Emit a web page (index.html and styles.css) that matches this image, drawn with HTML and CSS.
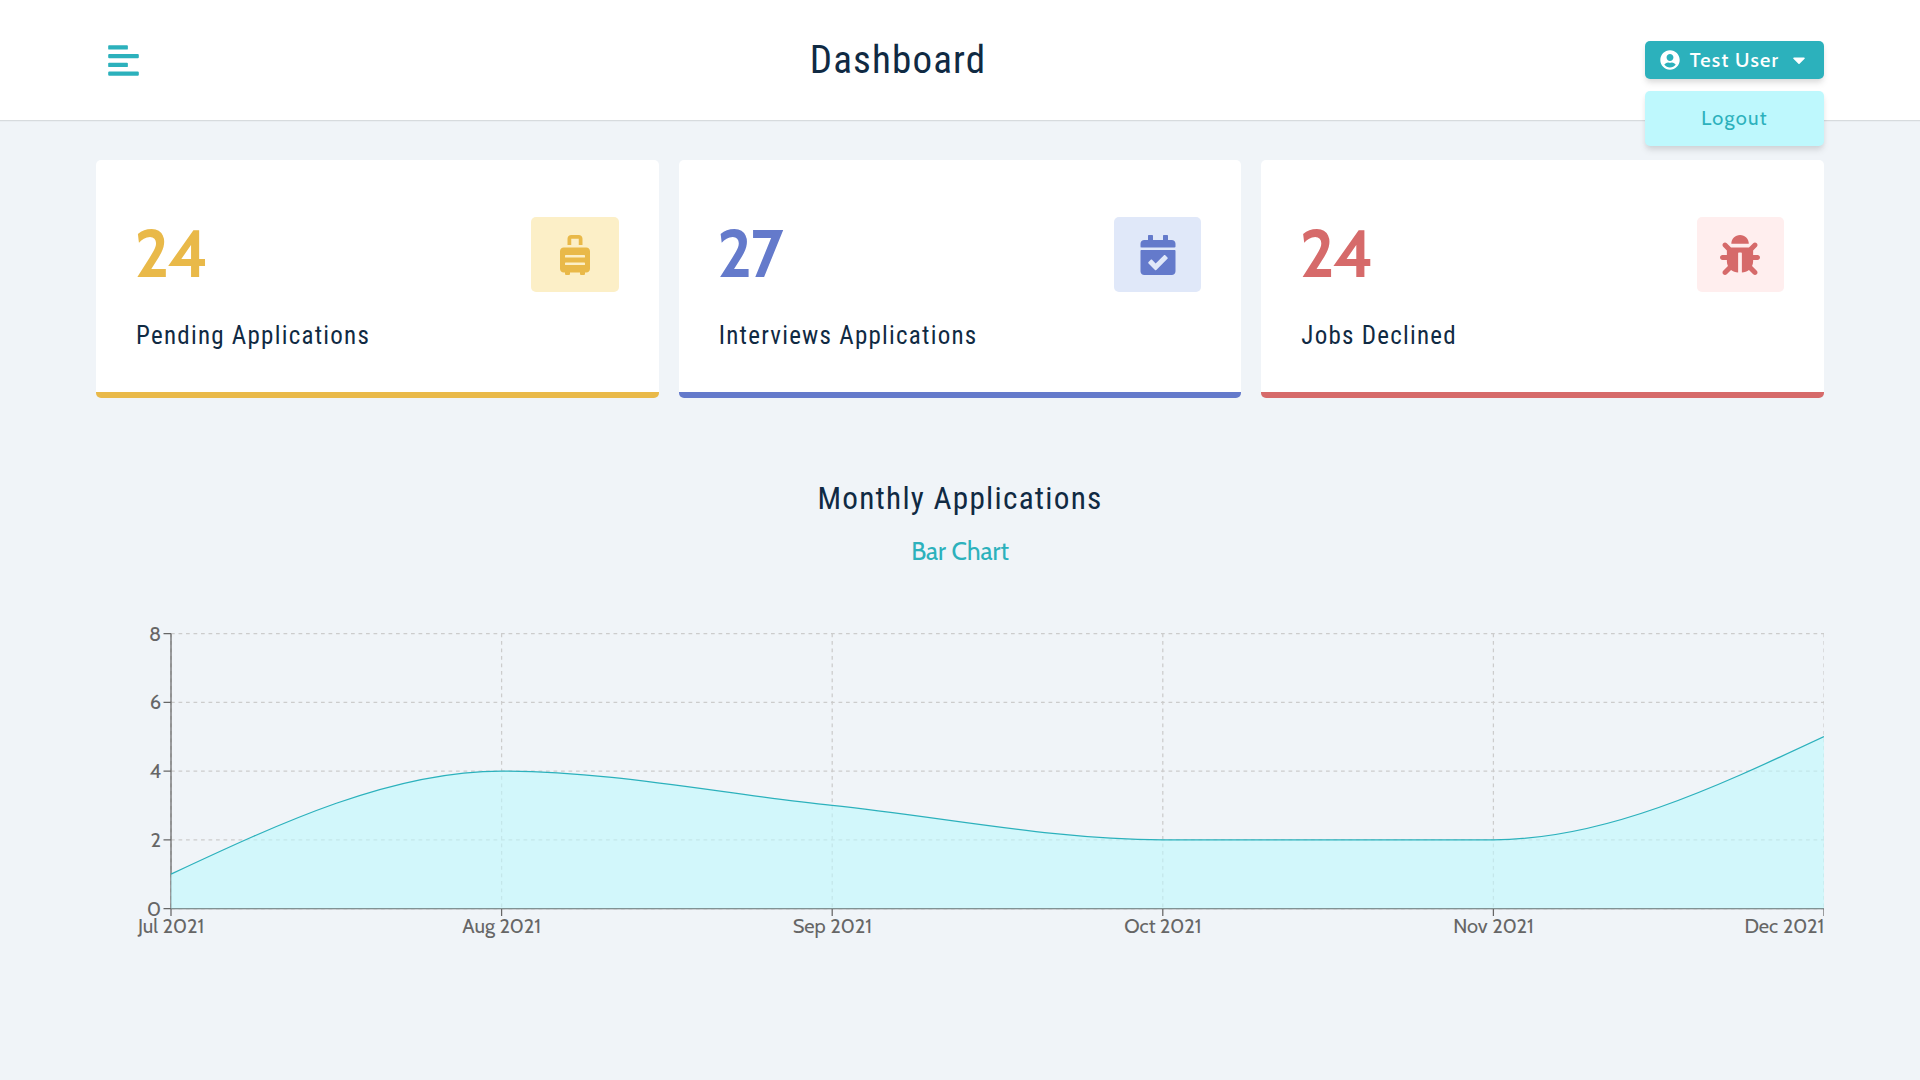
FILE: index.html
```
<!DOCTYPE html>
<html lang="en">
<head>
<meta charset="utf-8">
<title>Dashboard</title>
<link rel="stylesheet" href="styles.css">
</head>
<body>
<nav class="navbar">
  <div class="nav-center">
    <button class="toggle-btn" type="button" aria-label="Toggle sidebar">
      <svg viewBox="0 0 448 512"><path d="M12.83 352h262.34A12.82 12.82 0 0 0 288 339.17v-38.34A12.82 12.82 0 0 0 275.17 288H12.83A12.82 12.82 0 0 0 0 300.83v38.34A12.82 12.82 0 0 0 12.83 352zm0-256h262.34A12.82 12.82 0 0 0 288 83.17V44.83A12.82 12.82 0 0 0 275.17 32H12.83A12.82 12.82 0 0 0 0 44.83v38.34A12.82 12.82 0 0 0 12.83 96zM432 160H16a16 16 0 0 0-16 16v32a16 16 0 0 0 16 16h416a16 16 0 0 0 16-16v-32a16 16 0 0 0-16-16zm0 256H16a16 16 0 0 0-16 16v32a16 16 0 0 0 16 16h416a16 16 0 0 0 16-16v-32a16 16 0 0 0-16-16z"/></svg>
    </button>
    <h3 class="page-title">Dashboard</h3>
    <div class="user-menu">
      <button class="btn" type="button">
        <svg viewBox="0 0 496 512"><path d="M248 8C111 8 0 119 0 256s111 248 248 248 248-111 248-248S385 8 248 8zm0 96c48.6 0 88 39.4 88 88s-39.4 88-88 88-88-39.4-88-88 39.4-88 88-88zm0 344c-58.7 0-111.3-26.6-146.5-68.2 18.8-35.4 55.6-59.8 98.5-59.8 2.4 0 4.8.4 7.1 1.1 13 4.2 26.6 6.9 40.9 6.9 14.3 0 28-2.7 40.9-6.9 2.3-.7 4.7-1.1 7.1-1.1 42.9 0 79.7 24.4 98.5 59.8C359.3 421.4 306.7 448 248 448z"/></svg>
        <span>Test User</span>
        <svg viewBox="0 0 320 512"><path d="M31.3 192h257.3c17.8 0 26.7 21.5 14.1 34.1L174.1 354.7c-7.8 7.8-20.5 7.8-28.3 0L17.2 226.1C4.6 213.5 13.5 192 31.3 192z"/></svg>
      </button>
      <div class="dropdown"><button class="dropdown-btn" type="button">Logout</button></div>
    </div>
  </div>
</nav>

<main class="page">
  <section class="stats">
    <article class="stat stat-pending">
      <header>
        <span class="count">24</span>
        <span class="icon"><svg viewBox="0 0 384 512"><path d="M336 160H48c-26.51 0-48 21.49-48 48v224c0 26.51 21.49 48 48 48h16v16c0 8.84 7.16 16 16 16h32c8.84 0 16-7.16 16-16v-16h128v16c0 8.84 7.16 16 16 16h32c8.84 0 16-7.16 16-16v-16h16c26.51 0 48-21.49 48-48V208c0-26.51-21.49-48-48-48zm-16 216c0 4.42-3.58 8-8 8H72c-4.42 0-8-3.58-8-8v-16c0-4.42 3.58-8 8-8h240c4.42 0 8 3.58 8 8v16zm0-96c0 4.42-3.58 8-8 8H72c-4.42 0-8-3.58-8-8v-16c0-4.42 3.58-8 8-8h240c4.42 0 8 3.58 8 8v16zM144 48h96v80h48V48c0-26.51-21.49-48-48-48h-96c-26.51 0-48 21.49-48 48v80h48V48z"/></svg></span>
      </header>
      <h5 class="stat-title">Pending Applications</h5>
    </article>
    <article class="stat stat-interview">
      <header>
        <span class="count">27</span>
        <span class="icon"><svg viewBox="0 0 448 512"><path d="M436 160H12c-6.627 0-12-5.373-12-12v-36c0-26.51 21.49-48 48-48h48V12c0-6.627 5.373-12 12-12h40c6.627 0 12 5.373 12 12v52h128V12c0-6.627 5.373-12 12-12h40c6.627 0 12 5.373 12 12v52h48c26.51 0 48 21.49 48 48v36c0 6.627-5.373 12-12 12zM12 192h424c6.627 0 12 5.373 12 12v260c0 26.51-21.49 48-48 48H48c-26.51 0-48-21.49-48-48V204c0-6.627 5.373-12 12-12zm333.296 95.947l-28.169-28.398c-4.667-4.705-12.265-4.736-16.97-.068L194.12 364.665l-45.98-46.352c-4.667-4.705-12.266-4.736-16.971-.068l-28.397 28.17c-4.705 4.667-4.736 12.265-.068 16.97l82.601 83.269c4.667 4.705 12.265 4.736 16.97.068l142.953-141.805c4.705-4.667 4.736-12.265.068-16.97z"/></svg></span>
      </header>
      <h5 class="stat-title">Interviews Applications</h5>
    </article>
    <article class="stat stat-declined">
      <header>
        <span class="count">24</span>
        <span class="icon"><svg viewBox="0 0 512 512"><path d="M511.988 288.9c-.478 17.43-15.217 31.1-32.653 31.1H424v16c0 21.864-4.882 42.584-13.6 61.145l60.228 60.228c12.496 12.497 12.496 32.758 0 45.255-12.498 12.497-32.759 12.496-45.256 0l-54.736-54.736C345.886 467.965 314.351 480 280 480V236c0-6.627-5.373-12-12-12h-24c-6.627 0-12 5.373-12 12v244c-34.351 0-65.886-12.035-90.636-32.108l-54.736 54.736c-12.498 12.497-32.759 12.496-45.256 0-12.496-12.497-12.496-32.758 0-45.255l60.228-60.228C92.882 378.584 88 357.864 88 336v-16H32.666C15.23 320 .491 306.33.013 288.9-.484 270.816 14.028 256 32 256h56v-58.745l-46.628-46.628c-12.496-12.497-12.496-32.758 0-45.255 12.498-12.497 32.758-12.497 45.256 0L141.255 160h229.489l54.627-54.627c12.498-12.497 32.758-12.497 45.256 0 12.496 12.497 12.496 32.758 0 45.255L424 197.255V256h56c17.972 0 32.484 14.816 31.988 32.9zM257 0c-61.856 0-112 50.144-112 112h224C369 50.144 318.856 0 257 0z"/></svg></span>
      </header>
      <h5 class="stat-title">Jobs Declined</h5>
    </article>
  </section>

  <section class="charts">
    <h4 class="chart-title">Monthly Applications</h4>
    <button class="chart-toggle" type="button">Bar Chart</button>
    <svg class="chart" viewBox="0 0 1382.4 300">
      <g class="grid">
        <path d="M60 270H1382.4M60 215H1382.4M60 160H1382.4M60 105H1382.4M60 50H1382.4"/>
        <path d="M60 50V270M324.48 50V270M588.96 50V270M853.44 50V270M1117.92 50V270M1382.4 50V270"/>
      </g>
      <g class="axis">
        <path d="M60 270H1382.4M60 270v6M324.48 270v6M588.96 270v6M853.44 270v6M1117.92 270v6M1382.4 270v6"/>
        <path d="M60 50V270M54 270h6M54 215h6M54 160h6M54 105h6M54 50h6"/>
      </g>
      <g class="labels labels-x">
        <text x="60" y="289.4">Jul 2021</text>
        <text x="324.48" y="289.4">Aug 2021</text>
        <text x="588.96" y="289.4">Sep 2021</text>
        <text x="853.44" y="289.4">Oct 2021</text>
        <text x="1117.92" y="289.4">Nov 2021</text>
        <text x="1350.6" y="289.4">Dec 2021</text>
      </g>
      <g class="labels labels-y">
        <text x="52" y="275.7">0</text>
        <text x="52" y="220.7">2</text>
        <text x="52" y="165.7">4</text>
        <text x="52" y="110.7">6</text>
        <text x="52" y="55.7">8</text>
      </g>
      <path class="area" d="M60 242.5C148.16 201.25 236.32 160 324.48 160C412.64 160 500.8 178.333 588.96 187.5C677.12 196.667 765.28 215 853.44 215L1117.92 215C1206.08 215 1294.24 173.75 1382.4 132.5V270H60Z"/>
      <path class="curve" d="M60 242.5C148.16 201.25 236.32 160 324.48 160C412.64 160 500.8 178.333 588.96 187.5C677.12 196.667 765.28 215 853.44 215L1117.92 215C1206.08 215 1294.24 173.75 1382.4 132.5"/>
    </svg>
  </section>
</main>
</body>
</html>
```
FILE: styles.css
```
:root {
  --primary: #2cb1bc;
  --primary-light: #bef8fd;
  --text: #102a43;
  --page: #f0f4f8;
  --shadow: 0 5px 7.5px -1.25px rgba(0, 0, 0, .1), 0 2.5px 5px -1.25px rgba(0, 0, 0, .06);
  --heading-font: "Roboto Condensed", Roboto, sans-serif;
  --body-font: Cabin, Lato, sans-serif;
}

* { box-sizing: border-box; margin: 0; padding: 0; }

body {
  min-height: 100vh;
  background: var(--page);
  color: var(--text);
  font: 400 20px/1.75 var(--body-font);
}

button { border: 0; background: none; font: inherit; cursor: pointer; }
svg { display: block; fill: currentColor; }

h3, h4, h5 {
  font-family: var(--heading-font);
  font-weight: 400;
  line-height: 1.3;
  letter-spacing: 1.25px;
}

.navbar {
  display: flex;
  justify-content: center;
  height: 120px;
  background: #fff;
  box-shadow: 0 1.25px 0 0 rgba(0, 0, 0, .1);
}

.nav-center {
  display: flex;
  align-items: center;
  justify-content: space-between;
  width: 1728px;
}

.toggle-btn { padding: 0 10px; color: var(--primary); }
.toggle-btn svg { width: 35px; height: 35px; }
.page-title { font-size: 39.06px; letter-spacing: 1.15px; }

.user-menu { position: relative; width: 179px; }

.btn {
  display: flex;
  align-items: center;
  justify-content: center;
  gap: 10px;
  width: 100%;
  height: 38px;
  border-radius: 5px;
  background: var(--primary);
  color: #fff;
  font-weight: 500;
  letter-spacing: 1.2px;
  line-height: 1;
  box-shadow: var(--shadow);
}
.btn svg { width: 20px; height: 20px; }

.dropdown {
  position: absolute;
  top: 50px;
  left: 0;
  display: flex;
  align-items: center;
  justify-content: center;
  width: 100%;
  height: 55px;
  border-radius: 5px;
  background: var(--primary-light);
  box-shadow: var(--shadow);
}
.dropdown-btn { color: var(--primary); letter-spacing: 1.25px; }

.page { width: 1728px; margin: 0 auto; padding-top: 40px; }

.stats { display: grid; grid-template-columns: repeat(3, 1fr); gap: 20px; }

.stat {
  padding: 40px 40px 39px;
  border-bottom: 6px solid var(--accent);
  border-radius: 5px;
  background: #fff;
}
.stat header { display: flex; align-items: center; justify-content: space-between; }

.stat-pending { --accent: #e9b949; --tint: #fcefc7; }
.stat-interview { --accent: #647acb; --tint: #e0e8f9; }
.stat-declined { --accent: #d66a6a; --tint: #ffeeee; }

.count {
  margin-left: -1.5px;
  padding-bottom: 2px;
  color: var(--accent);
  font-size: 65.5px;
  font-weight: 700;
  letter-spacing: -1.5px;
  line-height: 107.4px;
}

.icon {
  display: flex;
  align-items: center;
  justify-content: center;
  width: 87.5px;
  height: 75px;
  border-radius: 5px;
  background: var(--tint);
  color: var(--accent);
}
.icon svg { width: 40px; height: 40px; }

.stat-title { margin-top: 11px; font-size: 25px; }

.charts { margin-top: 81px; text-align: center; }
.chart-title { margin-bottom: 16px; font-size: 31.25px; }
.chart-toggle { color: var(--primary); font-size: 25px; line-height: 30px; display: block; margin: 0 auto 5px; }

.chart { width: 1728px; height: 375px; }
.grid { fill: none; stroke: #ccc; stroke-dasharray: 3 3; }
.axis { fill: none; stroke: #666; }
.labels { fill: #666; font-size: 16px; }
.labels-x { text-anchor: middle; }
.labels-y { text-anchor: end; }
.area { fill: var(--primary-light); fill-opacity: .6; }
.curve { fill: none; stroke: var(--primary); }
```
